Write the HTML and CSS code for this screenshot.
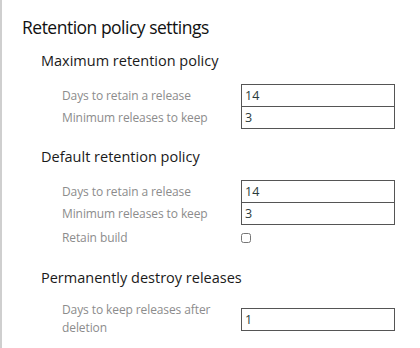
FILE: index.html
```html
<!DOCTYPE html>
<html>
    <head>
        <meta charset="utf-8">
        <meta name="viewport" content="width=device-width, initial-scale=1">
        <link rel="stylesheet" href="styles.css">
    </head>
    <body>
        <!-- retention settings panel -->
        <div class="panel">
            <h1>Retention policy settings</h1>

            <div class="group">
                <h2>Maximum retention policy</h2>
                <div class="fields">
                    <label>Days to retain a release</label>
                    <input type="text" value="14">
                    <label>Minimum releases to keep</label>
                    <input type="text" class="joined" value="3">
                </div>
            </div>

            <div class="group">
                <h2>Default retention policy</h2>
                <div class="fields">
                    <label>Days to retain a release</label>
                    <input type="text" value="14">
                    <label>Minimum releases to keep</label>
                    <input type="text" class="joined" value="3">
                    <label>Retain build</label>
                    <span class="check"><input type="checkbox"></span>
                </div>
            </div>

            <div class="group">
                <h2>Permanently destroy releases</h2>
                <div class="fields">
                    <label>Days to keep releases after deletion</label>
                    <input type="text" value="1">
                </div>
            </div>
        </div>
    </body>
</html>
```

FILE: styles.css
```css
* {box-sizing: border-box}

body {
  margin: 0;
  font-family: "Open Sans", "Noto Sans", sans-serif;
  background: #fff;
}

/* gray rule down the left side */
.panel {
  border-left: 2px solid #cfcfcf;
  min-height: 348px;
  padding: 15px 0 0 20px;
}

h1 {
  font-size: 17.5px;
  font-weight: 400;
  letter-spacing: -0.5px;
  color: #111;
  margin: 0 0 11px 0;
  line-height: 24px;
}

.group {
  padding-left: 19px;
  margin-bottom: 17px;
}

h2 {
  font-size: 14.5px;
  font-weight: 400;
  color: #1a1a1a;
  margin: 0 0 12px 0;
  line-height: 22px;
}

/* label column + input column */
.fields {
  display: grid;
  grid-template-columns: 179px 154px;
  align-items: center;
  padding-left: 21px;
}

label {
  font-size: 12px;
  letter-spacing: -0.1px;
  color: #8c8c8c;
  line-height: 18px;
  padding-right: 16px;
}

input[type=text] {
  width: 154px;
  height: 23px;
  border: 1px solid #555;
  padding: 0 3px;
  font-family: inherit;
  font-size: 12.5px;
  color: #2a3b3b;
  outline: none;
}

.joined {
  margin-top: -1px;
}

.check {
  display: flex;
  height: 25px;
  align-items: center;
}

input[type=checkbox] {
  margin: 0;
  width: 10px;
  height: 10px;
}
```
